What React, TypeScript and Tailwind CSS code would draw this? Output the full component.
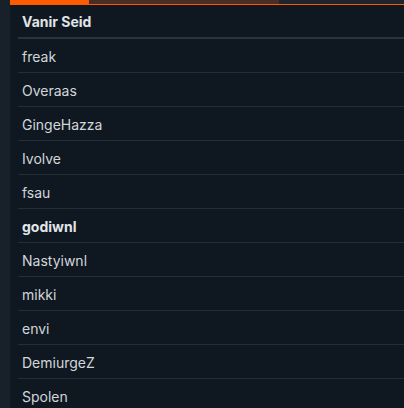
import React from "react";

const rows: { name: string; bold?: boolean }[] = [
  { name: "freak" },
  { name: "Overaas" },
  { name: "GingeHazza" },
  { name: "Ivolve" },
  { name: "fsau" },
  { name: "godiwnl", bold: true },
  { name: "Nastyiwnl" },
  { name: "mikki" },
  { name: "envi" },
  { name: "DemiurgeZ" },
  { name: "Spolen" },
];

export default function App() {
  return (
    <div
      className="flex w-[404px] h-[408px] overflow-hidden bg-[#18202a]"
      style={{ fontFamily: "Inter, 'Noto Sans', sans-serif" }}
    >
      <div className="w-[10px] shrink-0 bg-[#18202a]" />
      <div className="flex-1 flex flex-col bg-[#0f1821]">
        <div className="flex flex-col">
          <div className="flex h-[4px]">
            <div className="w-[79px] bg-[#ff5a00]" />
            <div className="w-[190px] bg-[#4a2d24]" />
            <div className="flex-1 bg-[#1e242b]" />
          </div>
          <div className="h-[1px] bg-[#ff5a00]" />
        </div>
        <div className="ml-[8px] flex flex-col">
          <div className="h-[34px] shrink-0 flex items-center pl-[4px] pt-[1px] border-b-2 border-[#29333c] text-[14px] font-bold text-[#e1e4e7]">
            Vanir Seid
          </div>
          {rows.map((r) => (
            <div
              key={r.name}
              className={`h-[34px] shrink-0 flex items-center pl-[4px] pt-[1px] border-b border-[#242e37] text-[14px] ${
                r.bold ? "font-bold text-[#e1e4e7]" : "text-[#d2d6da]"
              }`}
            >
              {r.name}
            </div>
          ))}
        </div>
      </div>
    </div>
  );
}
